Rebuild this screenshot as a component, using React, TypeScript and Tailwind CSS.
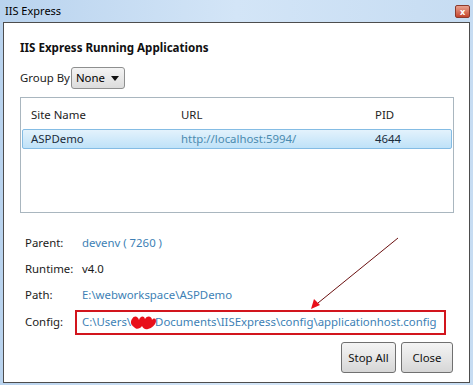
const font = { fontFamily: '"Noto Sans", "Open Sans", sans-serif' };

function DetailRow({ label, value, link = true }: { label: string; value: string; link?: boolean }) {
    return (
        <div className="flex items-center h-[26px]">
            <span className="w-[57px] text-[#1a1a1a]">{label}</span>
            <span className={link ? "text-[#3d7fb5]" : "text-[#1a1a1a]"}>{value}</span>
        </div>
    );
}

export default function App() {
    return (
        <div
            className="relative w-[473px] h-[385px] overflow-hidden bg-gradient-to-r from-[#b9d3ee] via-[#d3e5f7] to-[#c6dcf2] text-[11.4px] flex flex-col"
            style={font}
        >
            {/* title bar */}
            <div className="h-[22px] flex items-center justify-between pl-[5px] pr-[3px]">
                <span className="text-[11px] text-black">IIS Express</span>
                <div className="w-[15px] h-[13px] rounded-[2px] bg-gradient-to-b from-[#e8a08e] to-[#c4432b] border border-[#8b3a2c] flex items-center justify-center text-white text-[9px] font-bold leading-none">
                    x
                </div>
            </div>

            {/* client area */}
            <div className="mx-[3px] mb-[2px] flex-1 bg-white border border-[#4d4d4d] flex flex-col pl-[16px] pr-[15px] pt-[15px] pb-[9px]">
                <h1 className="font-bold text-[11.6px] text-[#111] h-[20px] flex items-center">
                    IIS Express Running Applications
                </h1>

                <div className="flex items-center mt-[9px] h-[22px]">
                    <span className="text-[#222]">Group By</span>
                    <div className="ml-[1px] w-[54px] h-[22px] border border-[#8e8f8f] rounded-[3px] bg-gradient-to-b from-[#f4f4f4] to-[#dcdcdc] flex items-center justify-between pl-[4px] pr-[5px]">
                        <span>None</span>
                        <svg width="8" height="5" viewBox="0 0 8 5">
                            <path d="M0 0 L8 0 L4 5 Z" fill="#111" />
                        </svg>
                    </div>
                </div>

                {/* list view */}
                <div className="mt-[8px] w-[434px] h-[116px] border border-[#a9b6bf] p-[1px]">
                    <div className="flex items-center h-[30px] pl-[9px] pt-[2px] text-[#222]">
                        <span className="w-[150px]">Site Name</span>
                        <span className="w-[194px]">URL</span>
                        <span>PID</span>
                    </div>
                    <div className="flex items-center h-[20px] pl-[8px] border border-[#84bce4] rounded-[2px] bg-gradient-to-b from-[#e3f2fc] to-[#bfe2f8]">
                        <span className="w-[150px] text-[#1a2c3c]">ASPDemo</span>
                        <span className="w-[194px] text-[#4b8bb0]">http://localhost:5994/</span>
                        <span className="text-[#1a2c3c]">4644</span>
                    </div>
                </div>

                {/* details */}
                <div className="mt-[17px] pl-[5px]">
                    <DetailRow label="Parent:" value="devenv ( 7260 )" />
                    <DetailRow label="Runtime:" value="v4.0" link={false} />
                    <DetailRow label="Path:" value="E:\webworkspace\ASPDemo" />
                    <div className="flex items-center h-[26px] mt-[1px]">
                        <span className="w-[50px] text-[#1a1a1a]">Config:</span>
                        <div className="w-[371px] h-[25px] border-2 border-[#d2151d] flex items-center pl-[5px] text-[#3d7fb5] whitespace-nowrap">
                            <span>C:\Users\</span>
                            <svg width="28" height="19" viewBox="0 0 28 17" className="shrink-0 -ml-[1px] -mr-[3px]">
                                <path
                                    d="M2 5 C4 1 8 2 9 6 C10 2 14 1 15 5 C17 1 22 2 22 6 C24 3 27 5 26 8 C25 11 22 14 18 15 C15 16 13 14 12 12 C10 15 6 16 4 13 C1 11 0 8 2 5 Z"
                                    fill="#e8101a"
                                />
                            </svg>
                            <span>Documents\IISExpress\config\applicationhost.config</span>
                        </div>
                    </div>
                </div>

                {/* buttons */}
                <div className="mt-auto flex justify-end gap-[5px] pr-[1px]">
                    <button className="w-[55px] h-[31px] border border-[#707070] rounded-[3px] bg-gradient-to-b from-[#f4f4f4] via-[#e6e6e6] to-[#d6d6d6] text-[#111]">
                        Stop All
                    </button>
                    <button className="w-[52px] h-[31px] border border-[#707070] rounded-[3px] bg-gradient-to-b from-[#f4f4f4] via-[#e6e6e6] to-[#d6d6d6] text-[#111]">
                        Close
                    </button>
                </div>
            </div>

            {/* annotation arrow */}
            <svg className="absolute left-0 top-0 pointer-events-none" width="473" height="385">
                <line x1="398" y1="238" x2="318" y2="303" stroke="#6b1010" strokeWidth="1" />
                <path d="M311 309 L314 299 L320 305 Z" fill="#e8101a" />
            </svg>
        </div>
    );
}
